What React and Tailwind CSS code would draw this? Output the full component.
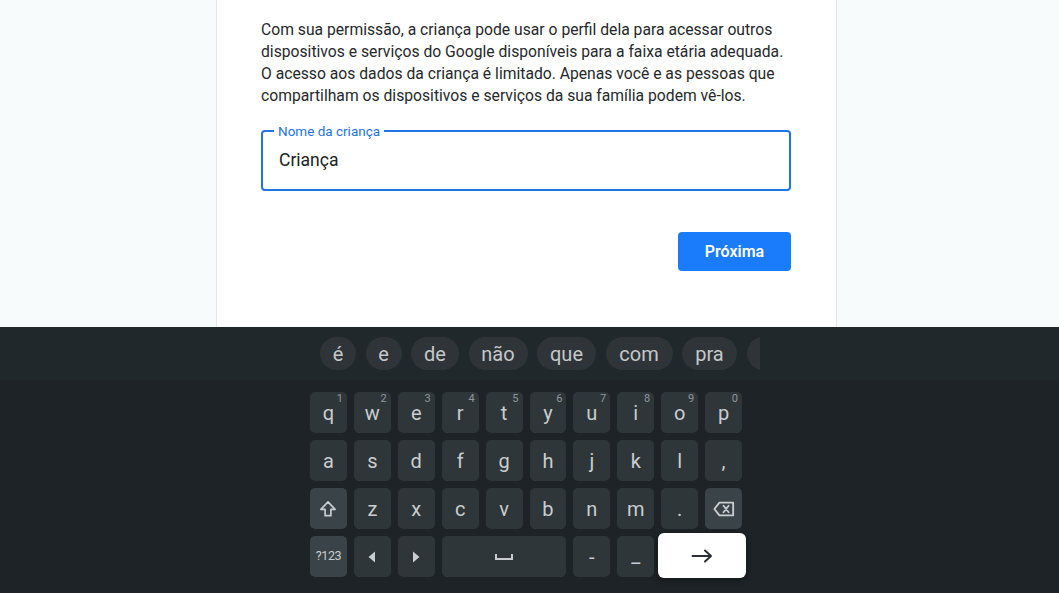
import React from "react";

const font = { fontFamily: "Roboto, 'Noto Sans', sans-serif" };

const suggestions = [
  { t: "é", w: "w-[36px]" },
  { t: "e", w: "w-[36px]" },
  { t: "de", w: "w-[48px]" },
  { t: "não", w: "w-[59px]" },
  { t: "que", w: "w-[59px]" },
  { t: "com", w: "w-[67px]" },
  { t: "pra", w: "w-[55px]" },
  { t: "", w: "w-[40px]" },
];

const row1 = [
  ["q", "1"], ["w", "2"], ["e", "3"], ["r", "4"], ["t", "5"],
  ["y", "6"], ["u", "7"], ["i", "8"], ["o", "9"], ["p", "0"],
];
const row2 = ["a", "s", "d", "f", "g", "h", "j", "k", "l", ","];
const row3 = ["z", "x", "c", "v", "b", "n", "m", "."];

const Key = ({ children, hint, special, small, className = "" }) => (
  <div
    className={`relative flex items-center justify-center whitespace-nowrap rounded-[5px] text-[#c9cdcf] ${
      small ? "text-[12.5px] tracking-[-0.4px]" : "text-[20px]"
    } ${special ? "bg-[#3a4448]" : "bg-[#2e3639]"} ${className}`}
  >
    {children}
    {hint && (
      <span className="absolute right-[4px] top-[1px] text-[11px] leading-none text-[#8f979b]">
        {hint}
      </span>
    )}
  </div>
);

const ShiftIcon = () => (
  <svg width="20" height="20" viewBox="0 0 24 24" fill="none" stroke="#c9cdcf" strokeWidth="2" strokeLinejoin="round">
    <path d="M12 3.5 3.5 12.5H8.5V20H15.5V12.5H20.5Z" />
  </svg>
);

const BackspaceIcon = () => (
  <svg width="22" height="16" viewBox="0 0 24 17" fill="none" stroke="#c9cdcf" strokeWidth="2" strokeLinejoin="round">
    <path d="M7 1.5H22V15.5H7L1.5 8.5Z" />
    <path d="M11.5 5 17 12M17 5 11.5 12" strokeLinecap="round" />
  </svg>
);

const App = () => {
  return (
    <div className="w-[1059px] h-[593px] overflow-hidden flex flex-col" style={font}>
      {/* page */}
      <div className="flex h-[327px] bg-[#f8fbfc]">
        <div className="w-[216px]" />
        <div className="w-[621px] bg-white border-x border-[#e3e7e9] pl-[44px] pt-[19px]">
          <div className="w-[530px]">
            <p className="text-[15.7px] leading-[22px] text-[#26292c] whitespace-nowrap">
              Com sua permissão, a criança pode usar o perfil dela para acessar outros
              <br />
              dispositivos e serviços do Google disponíveis para a faixa etária adequada.
              <br />
              O acesso aos dados da criança é limitado. Apenas você e as pessoas que
              <br />
              compartilham os dispositivos e serviços da sua família podem vê-los.
            </p>
            <div className="relative mt-[23px] h-[61px] rounded-[4px] border-2 border-[#1f74e6] flex items-center pl-[16px]">
              <span className="absolute -top-[10px] left-[11px] bg-white px-[4px] text-[13.5px] leading-[18px] text-[#1f74e6]">
                Nome da criança
              </span>
              <span className="text-[17.5px] text-[#202124]">Criança</span>
            </div>
            <div className="flex justify-end mt-[41px]">
              <button className="w-[113px] h-[39px] rounded-[4px] bg-[#1a7cfb] text-white text-[16px] font-semibold">
                Próxima
              </button>
            </div>
          </div>
        </div>
        <div className="flex-1" />
      </div>

      {/* keyboard */}
      <div className="flex-1 bg-[#1d2326]">
        <div className="h-[53px] bg-[#21282b] flex items-center">
          <div className="ml-[300px] w-[460px] pl-[20px] overflow-hidden">
            <div className="flex gap-[9.5px]">
              {suggestions.map((s, i) => (
                <div
                  key={i}
                  className={`${s.w} shrink-0 h-[33px] rounded-full bg-[#2f3438] flex items-center justify-center text-[20px] text-[#c4c8ca]`}
                >
                  {s.t}
                </div>
              ))}
            </div>
          </div>
        </div>

        <div className="ml-[310px] w-[432px] pt-[12px] flex flex-col gap-[7px]">
          <div className="grid grid-cols-10 gap-[7px] h-[41px]">
            {row1.map(([k, n]) => (
              <Key key={k} hint={n}>{k}</Key>
            ))}
          </div>
          <div className="grid grid-cols-10 gap-[7px] h-[41px]">
            {row2.map((k) => (
              <Key key={k}>{k}</Key>
            ))}
          </div>
          <div className="grid grid-cols-10 gap-[7px] h-[41px]">
            <Key special>
              <ShiftIcon />
            </Key>
            {row3.map((k) => (
              <Key key={k}>{k}</Key>
            ))}
            <Key special>
              <BackspaceIcon />
            </Key>
          </div>
          <div className="grid grid-cols-10 gap-[7px] h-[41px]">
            <Key special small>?123</Key>
            <Key>
              <svg width="8" height="12" viewBox="0 0 8 12">
                <path d="M7 0.5V11.5L0.5 6Z" fill="#c9cdcf" />
              </svg>
            </Key>
            <Key>
              <svg width="8" height="12" viewBox="0 0 8 12">
                <path d="M1 0.5V11.5L7.5 6Z" fill="#c9cdcf" />
              </svg>
            </Key>
            <Key className="col-span-3">
              <svg width="18" height="6" viewBox="0 0 18 6" fill="none" stroke="#c9cdcf" strokeWidth="2">
                <path d="M1 0V5H17V0" />
              </svg>
            </Key>
            <Key>-</Key>
            <Key>
              <span className="-mt-[4px]">_</span>
            </Key>
            <div className="col-span-2 -ml-[3px] -mr-[4px] -mt-[3px] -mb-[1px] rounded-[6px] bg-white flex items-center justify-center shadow-[0_2px_6px_rgba(0,0,0,0.4)]">
              <svg width="22" height="14" viewBox="0 0 22 14" fill="none" stroke="#2b2f33" strokeWidth="2" strokeLinecap="round" strokeLinejoin="round">
                <path d="M1.5 7H20M14 1.5 20 7 14 12.5" />
              </svg>
            </div>
          </div>
        </div>
      </div>
    </div>
  );
};

export default App;
